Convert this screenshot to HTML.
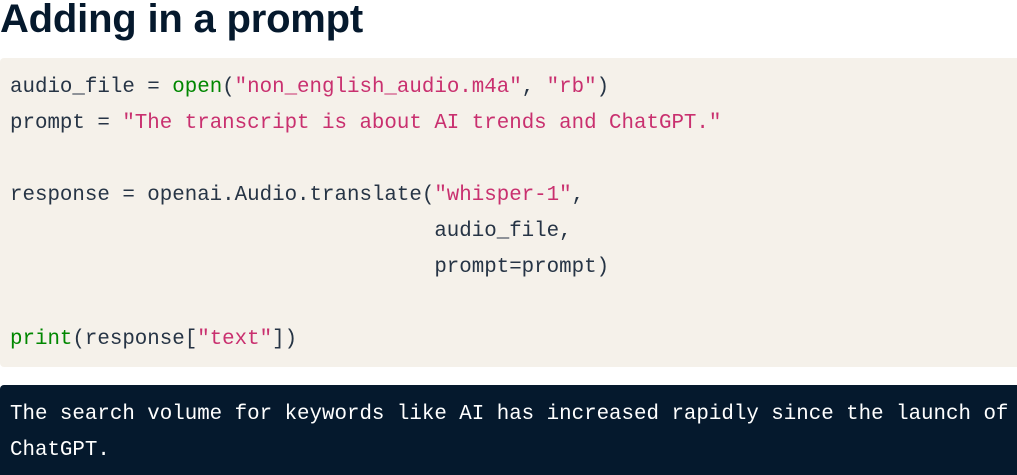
<!DOCTYPE html>
<html><head><style>
html,body{margin:0;padding:0;background:#fff;width:1017px;height:466px;overflow:hidden}
h1{margin:0;position:absolute;left:0;top:-3px;font:bold 40px "Liberation Sans",sans-serif;color:#05192d;letter-spacing:-0.2px}
.code{position:absolute;left:0;top:58px;width:1017px;height:309px;background:#f5f1ea;border-radius:4px 0 0 4px}
.out{position:absolute;left:0;top:385px;width:1017px;height:90px;background:#05192d;border-radius:4px 0 0 0}
pre{margin:0;position:absolute;left:10px;font:20.8px/36px "Liberation Mono",monospace;color:#263445;white-space:pre}
.code pre{top:12px}
.out pre{top:12px;color:#fff;font-weight:normal}
.g{color:#008700}.s{color:#c9306f}
</style></head><body>
<h1>Adding in a prompt</h1>
<div class="code"><pre>audio_file = <span class="g">open</span>(<span class="s">"non_english_audio.m4a"</span>, <span class="s">"rb"</span>)
prompt = <span class="s">"The transcript is about AI trends and ChatGPT."</span>

response = openai.Audio.translate(<span class="s">"whisper-1"</span>,
                                  audio_file,
                                  prompt=prompt)

<span class="g">print</span>(response[<span class="s">"text"</span>])</pre></div>
<div class="out"><pre>The search volume for keywords like AI has increased rapidly since the launch of
ChatGPT.</pre></div>
</body></html>
